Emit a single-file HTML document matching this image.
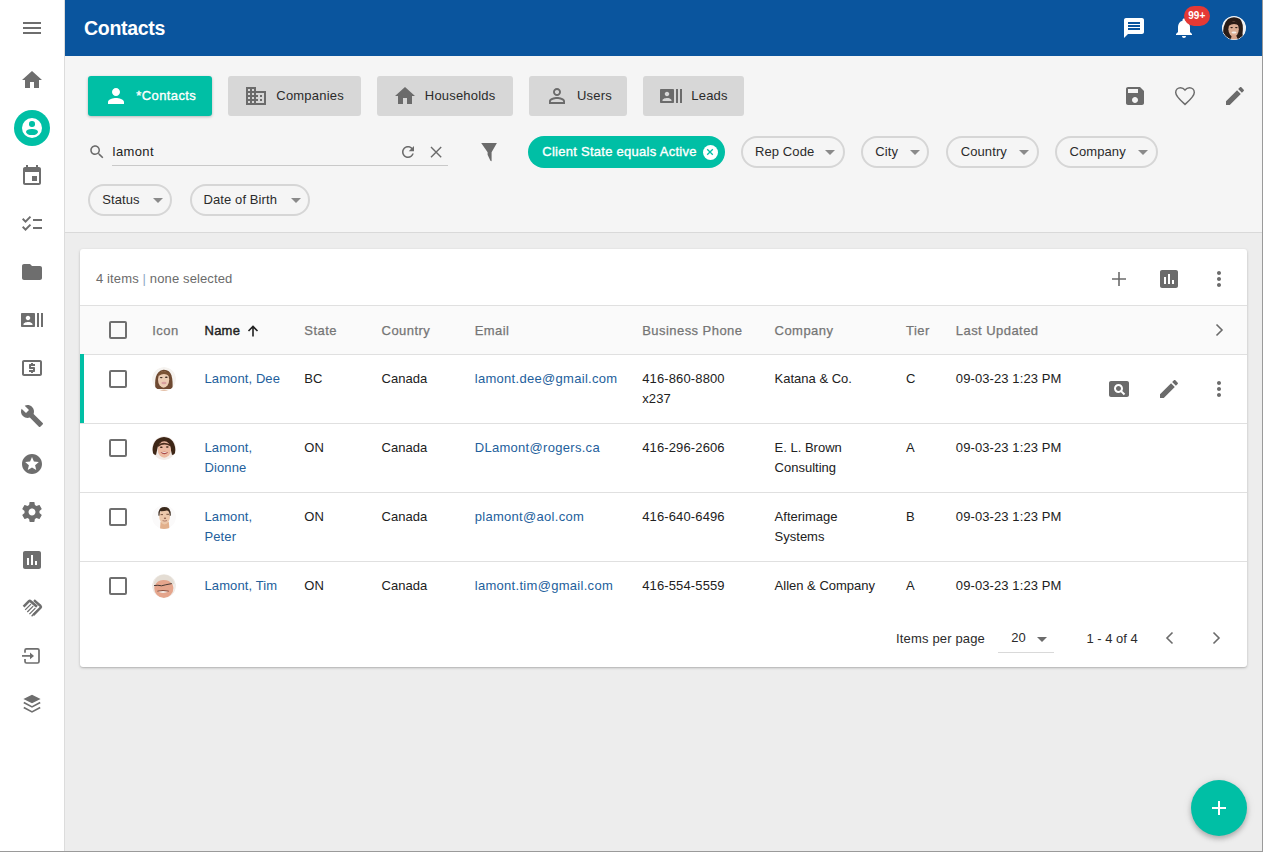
<!DOCTYPE html>
<html><head><meta charset="utf-8">
<style>
*{box-sizing:border-box;margin:0;padding:0}
html,body{width:1263px;height:852px;overflow:hidden;background:#ededed;font-family:"Liberation Sans",sans-serif;color:#212121}
.a{position:absolute;display:block}
.t{position:absolute;white-space:nowrap}
</style></head>
<body>
<div class="a" style="left:0;top:0;width:64px;height:852px;background:#fff"></div>
<div class="a" style="left:64px;top:0;width:1px;height:852px;background:#dcdcdc"></div>
<svg class="a" style="left:18px;top:594px" width="28" height="28" viewBox="0 0 28 28" fill="none" stroke="#6e6e6e"><path d="M5.6 12.6L11 7.2Q11.8 6.4 12.6 7.2L19 12.8" stroke-width="2.6"/><path d="M16 6.2L22.6 12Q23.4 12.8 22.6 13.6L15.2 21.2" stroke-width="2.4"/><path d="M7.2 15.9L13 10.1M9.3 18L15.2 12.1M11.4 20.1L17.4 14.1M13.6 22.3L19.6 16.3" stroke-width="1.3"/></svg>
<svg class="a" style="left:18px;top:642px" width="28" height="28" viewBox="0 0 28 28" fill="none" stroke="#6e6e6e" stroke-width="1.7"><path d="M7 10.8V8.3A1.5 1.5 0 0 1 8.5 6.8H19.5A1.5 1.5 0 0 1 21 8.3V19.5A1.5 1.5 0 0 1 19.5 21H8.5A1.5 1.5 0 0 1 7 19.5V17"/><path d="M4 13.9H12.5"/><path d="M12 10.6L16 13.9 12 17.2Z" fill="#6e6e6e" stroke="none"/></svg>
<svg class="a" style="left:18px;top:690px" width="28" height="28" viewBox="0 0 28 28" fill="none" stroke="#6e6e6e"><path d="M5.4 9L14 4.8 22.6 9 14 13.2Z" fill="#6e6e6e" stroke="none"/><path d="M5.8 12.4L14 16.9 22.2 12.4" stroke-width="1.7"/><path d="M5.8 17.4L14 21.9 22.2 17.4" stroke-width="1.7"/></svg>
<svg class="a" style="left:20.0px;top:16.0px;" width="24" height="24" viewBox="0 0 24 24" fill="#6e6e6e"><path d="M3 18h18v-2H3v2zm0-5h18v-2H3v2zm0-7v2h18V6H3z"/></svg>
<svg class="a" style="left:20.0px;top:68.0px;" width="24" height="24" viewBox="0 0 24 24" fill="#6e6e6e"><path d="M10 20v-6h4v6h5v-8h3L12 3 2 12h3v8z"/></svg>
<svg class="a" style="left:20.0px;top:164.0px;" width="24" height="24" viewBox="0 0 24 24" fill="#6e6e6e"><path d="M17 12h-5v5h5v-5zM16 1v2H8V1H6v2H5c-1.11 0-1.99.9-1.99 2L3 19c0 1.1.89 2 2 2h14c1.1 0 2-.9 2-2V5c0-1.1-.9-2-2-2h-1V1h-2zm3 18H5V8h14v11z"/></svg>
<svg class="a" style="left:20.0px;top:212.0px;" width="24" height="24" viewBox="0 0 24 24" fill="#6e6e6e"><path d="M22 7h-9v2h9V7zm0 8h-9v2h9v-2zM5.54 11L2 7.46l1.41-1.41 2.12 2.12 4.24-4.24 1.41 1.41L5.54 11zm0 8L2 15.46l1.41-1.41 2.12 2.12 4.24-4.24 1.41 1.41L5.54 19z"/></svg>
<svg class="a" style="left:20.0px;top:260.0px;" width="24" height="24" viewBox="0 0 24 24" fill="#6e6e6e"><path d="M10 4H4c-1.1 0-1.99.9-1.99 2L2 18c0 1.1.9 2 2 2h16c1.1 0 2-.9 2-2V8c0-1.1-.9-2-2-2h-8l-2-2z"/></svg>
<svg class="a" style="left:20.0px;top:308.0px;" width="24" height="24" viewBox="0 0 24 24" fill="#6e6e6e"><path d="M21 5v14h2V5h-2zm-4 14h2V5h-2v14zM14 5H2c-.55 0-1 .45-1 1v12c0 .55.45 1 1 1h12c.55 0 1-.45 1-1V6c0-.55-.45-1-1-1zM8 7.75c1.24 0 2.25 1.01 2.25 2.25S9.24 12.25 8 12.25 5.75 11.24 5.75 10 6.76 7.75 8 7.75zM12.5 17h-9v-.75c0-1.5 3-2.25 4.5-2.25s4.5.75 4.5 2.25V17z"/></svg>
<svg class="a" style="left:20.0px;top:356.0px;" width="24" height="24" viewBox="0 0 24 24" fill="#6e6e6e"><path d="M11 17h2v-1h1c.55 0 1-.45 1-1v-3c0-.55-.45-1-1-1h-3v-1h4V8h-2V7h-2v1h-1c-.55 0-1 .45-1 1v3c0 .55.45 1 1 1h3v1H9v2h2v1zm9-13H4c-1.11 0-1.99.89-1.99 2L2 18c0 1.11.89 2 2 2h16c1.11 0 2-.89 2-2V6c0-1.11-.89-2-2-2zm0 14H4V6h16v12z"/></svg>
<svg class="a" style="left:20.0px;top:404.0px;" width="24" height="24" viewBox="0 0 24 24" fill="#6e6e6e"><path d="M22.7 19l-9.1-9.1c.9-2.3.4-5-1.5-6.9-2-2-5-2.4-7.4-1.3L9 6 6 9 1.6 4.7C.4 7.1.9 10.1 2.9 12.1c1.9 1.9 4.6 2.4 6.9 1.5l9.1 9.1c.4.4 1 .4 1.4 0l2.3-2.3c.5-.4.5-1.1.1-1.4z"/></svg>
<svg class="a" style="left:20.0px;top:452.0px;" width="24" height="24" viewBox="0 0 24 24" fill="#6e6e6e"><path d="M11.99 2C6.47 2 2 6.48 2 12s4.47 10 9.99 10C17.52 22 22 17.52 22 12S17.52 2 11.99 2zm4.24 16L12 15.45 7.77 18l1.12-4.81-3.73-3.23 4.92-.42L12 5l1.92 4.53 4.92.42-3.73 3.23L16.23 18z"/></svg>
<svg class="a" style="left:20.0px;top:500.0px;" width="24" height="24" viewBox="0 0 24 24" fill="#6e6e6e"><path d="M19.43 12.98c.04-.32.07-.64.07-.98s-.03-.66-.07-.98l2.11-1.65c.19-.15.24-.42.12-.64l-2-3.46c-.12-.22-.39-.3-.61-.22l-2.49 1c-.52-.4-1.08-.73-1.690-.98l-.38-2.65C14.46 2.18 14.25 2 14 2h-4c-.25 0-.46.18-.49.42l-.38 2.65c-.61.25-1.17.59-1.69.98l-2.49-1c-.23-.09-.49 0-.61.22l-2 3.46c-.13.22-.07.49.12.64l2.11 1.65c-.04.32-.07.65-.07.98s.03.66.07.98l-2.11 1.65c-.19.15-.24.42-.12.64l2 3.46c.12.22.39.3.61.22l2.49-1c.52.4 1.08.73 1.69.98l.38 2.65c.03.24.24.42.49.42h4c.25 0 .46-.18.49-.42l.38-2.65c.61-.25 1.17-.59 1.69-.98l2.49 1c.23.09.49 0 .61-.22l2-3.46c.12-.22.07-.49-.12-.64l-2.11-1.65zM12 15.5c-1.93 0-3.5-1.570-3.5-3.5s1.57-3.5 3.5-3.5 3.5 1.57 3.5 3.5-1.57 3.5-3.5 3.5z"/></svg>
<svg class="a" style="left:20.0px;top:548.0px;" width="24" height="24" viewBox="0 0 24 24" fill="#6e6e6e"><path d="M19 3H5c-1.1 0-2 .9-2 2v14c0 1.1.9 2 2 2h14c1.1 0 2-.9 2-2V5c0-1.1-.9-2-2-2zM9 17H7v-7h2v7zm4 0h-2V7h2v10zm4 0h-2v-4h2v4z"/></svg>
<div class="a" style="left:14px;top:110px;width:36px;height:36px;border-radius:50%;background:#00bfa5"></div>
<div class="a" style="left:21.75px;top:117.75px;width:20.5px;height:20.5px;border-radius:50%;background:#fff"></div>
<div class="a" style="left:29.2px;top:121px;width:5.6px;height:5.6px;border-radius:50%;background:#00bfa5"></div>
<div class="a" style="left:26.3px;top:129.1px;width:11.4px;height:5.8px;border-radius:50%;background:#00bfa5"></div>
<div class="a" style="left:65px;top:0;width:1197px;height:56px;background:#0a559e"></div>
<div class="t" style="left:84px;top:14.24px;font-size:19.5px;line-height:29px;font-weight:700;color:#fff;letter-spacing:-0.3px;">Contacts</div>
<svg class="a" style="left:1122.0px;top:16.0px;" width="24" height="24" viewBox="0 0 24 24" fill="#fff"><path d="M20 2H4c-1.1 0-1.99.9-1.99 2L2 22l4-4h14c1.1 0 2-.9 2-2V4c0-1.1-.9-2-2-2zm-2 12H6v-2h12v2zm0-3H6V9h12v2zm0-3H6V6h12v2z"/></svg>
<svg class="a" style="left:1172.0px;top:16.0px;" width="24" height="24" viewBox="0 0 24 24" fill="#fff"><path d="M12 22c1.1 0 2-.9 2-2h-4c0 1.1.89 2 2 2zm6-6v-5c0-3.07-1.64-5.64-4.5-6.32V4c0-.83-.67-1.5-1.5-1.5s-1.5.67-1.5 1.5v.68C7.63 5.36 6 7.92 6 11v5l-2 2v1h16v-1l-2-2z"/></svg>
<div class="a" style="left:1184px;top:6px;width:26px;height:20px;border-radius:10px;background:#e53935"></div>
<div class="t" style="left:1188.3px;top:8.23px;font-size:10px;line-height:15px;font-weight:700;color:#fff;letter-spacing:0px;">99+</div>
<svg class="a" style="left:1220px;top:14px" width="28" height="28" viewBox="0 0 28 28"><defs><clipPath id="cMe"><circle cx="14" cy="14" r="12"/></clipPath><filter id="fMe"><feGaussianBlur stdDeviation=".35"/></filter></defs><g clip-path="url(#cMe)" filter="url(#fMe)"><circle cx="14" cy="14" r="12" fill="#f0f0f0"/><path d="M3 26Q2 10 8 5 14 1.5 20 5 24 9 22.5 20L24 26Z" fill="#2a1c17"/><ellipse cx="13.6" cy="15.2" rx="5.2" ry="7.6" fill="#dcae94"/><path d="M8 9Q14 5.5 20 10L19.6 12Q14 8 8.4 12Z" fill="#2a1c17"/><path d="M10.5 26L12 21H16L18 26Z" fill="#d8a48a"/><ellipse cx="11.6" cy="13.6" rx="1.3" ry=".6" fill="#2a1c17"/><ellipse cx="16.3" cy="13.6" rx="1.3" ry=".6" fill="#2a1c17"/><ellipse cx="14" cy="18.4" rx="2.5" ry="1" fill="#f4eeea"/><circle cx="14" cy="14" r="12" fill="none" stroke="#fff" stroke-width="1"/></g></svg>
<div class="a" style="left:65px;top:56px;width:1197px;height:176px;background:#f5f5f5"></div>
<div class="a" style="left:65px;top:232px;width:1197px;height:1px;background:#d9d9d9"></div>
<div class="a" style="left:88px;top:76px;width:124px;height:40px;background:#00bfa5;border-radius:3px;box-shadow:0 1px 3px rgba(0,0,0,.25);"></div>
<svg class="a" style="left:104.0px;top:84.0px;" width="24" height="24" viewBox="0 0 24 24" fill="#fff"><path d="M12 12c2.21 0 4-1.79 4-4s-1.79-4-4-4-4 1.79-4 4 1.79 4 4 4zm0 2c-2.67 0-8 1.34-8 4v2h16v-2c0-2.66-5.33-4-8-4z"/></svg>
<div class="t" style="left:136.3px;top:85.80px;font-size:13px;line-height:20px;font-weight:400;color:#fff;letter-spacing:0.4px;-webkit-text-stroke:.35px #fff">*Contacts</div>
<div class="a" style="left:228px;top:76px;width:133px;height:40px;background:#d7d7d7;border-radius:3px;"></div>
<svg class="a" style="left:244.0px;top:84.0px;" width="24" height="24" viewBox="0 0 24 24" fill="#6b6b6b"><path d="M12 7V3H2v18h20V7H12zM6 19H4v-2h2v2zm0-4H4v-2h2v2zm0-4H4V9h2v2zm0-4H4V5h2v2zm4 12H8v-2h2v2zm0-4H8v-2h2v2zm0-4H8V9h2v2zm0-4H8V5h2v2zm10 12h-8v-2h2v-2h-2v-2h2v-2h-2V9h8v10zm-2-8h-2v2h2v-2zm0 4h-2v2h2v-2z"/></svg>
<div class="t" style="left:276.3px;top:85.80px;font-size:13px;line-height:20px;font-weight:400;color:#2b2b2b;letter-spacing:0.2px;">Companies</div>
<div class="a" style="left:377px;top:76px;width:136px;height:40px;background:#d7d7d7;border-radius:3px;"></div>
<svg class="a" style="left:392.6px;top:84.0px;" width="24" height="24" viewBox="0 0 24 24" fill="#6b6b6b"><path d="M10 20v-6h4v6h5v-8h3L12 3 2 12h3v8z"/></svg>
<div class="t" style="left:424.8px;top:85.80px;font-size:13px;line-height:20px;font-weight:400;color:#2b2b2b;letter-spacing:0.2px;">Households</div>
<div class="a" style="left:529px;top:76px;width:98px;height:40px;background:#d7d7d7;border-radius:3px;"></div>
<svg class="a" style="left:545.0px;top:84.0px;" width="24" height="24" viewBox="0 0 24 24" fill="#6b6b6b"><path d="M12 5.9c1.16 0 2.1.94 2.1 2.1s-.94 2.1-2.1 2.1S9.9 9.16 9.9 8s.94-2.1 2.1-2.1m0 9c2.97 0 6.1 1.46 6.1 2.1v1.1H5.9V17c0-.64 3.13-2.1 6.1-2.1M12 4C9.79 4 8 5.79 8 8s1.79 4 4 4 4-1.79 4-4-1.79-4-4-4zm0 9c-2.67 0-8 1.34-8 4v3h16v-3c0-2.66-5.330-4-8-4z"/></svg>
<div class="t" style="left:577px;top:85.80px;font-size:13px;line-height:20px;font-weight:400;color:#2b2b2b;letter-spacing:0.2px;">Users</div>
<div class="a" style="left:643px;top:76px;width:101px;height:40px;background:#d7d7d7;border-radius:3px;"></div>
<svg class="a" style="left:659.0px;top:84.0px;" width="24" height="24" viewBox="0 0 24 24" fill="#6b6b6b"><path d="M21 5v14h2V5h-2zm-4 14h2V5h-2v14zM14 5H2c-.55 0-1 .45-1 1v12c0 .55.45 1 1 1h12c.55 0 1-.45 1-1V6c0-.55-.45-1-1-1zM8 7.75c1.24 0 2.25 1.01 2.25 2.25S9.24 12.25 8 12.25 5.75 11.24 5.75 10 6.76 7.75 8 7.75zM12.5 17h-9v-.75c0-1.5 3-2.25 4.5-2.25s4.5.75 4.5 2.25V17z"/></svg>
<div class="t" style="left:691.3px;top:85.80px;font-size:13px;line-height:20px;font-weight:400;color:#2b2b2b;letter-spacing:0.2px;">Leads</div>
<svg class="a" style="left:1123.0px;top:84.0px;" width="24" height="24" viewBox="0 0 24 24" fill="#6b6b6b"><path d="M17 3H5c-1.11 0-2 .9-2 2v14c0 1.1.89 2 2 2h14c1.1 0 2-.9 2-2V7l-4-4zm-5 16c-1.66 0-3-1.34-3-3s1.34-3 3-3 3 1.34 3 3-1.34 3-3 3zm3-10H5V5h10v4z"/></svg>
<svg class="a" style="left:1173px;top:84px" width="24" height="24" viewBox="0 0 24 24"><path d="M12 20.4L10.9 19.4C6.1 15.1 2.7 12 2.7 8.5 2.7 5.7 4.9 3.7 7.5 3.7 9.2 3.7 10.9 4.6 12 6 13.1 4.6 14.8 3.7 16.5 3.7 19.1 3.7 21.3 5.7 21.3 8.5 21.3 12 17.9 15.1 13.1 19.4Z" fill="none" stroke="#6b6b6b" stroke-width="1.45"/></svg>
<svg class="a" style="left:1223.0px;top:84.0px;" width="24" height="24" viewBox="0 0 24 24" fill="#6b6b6b"><path d="M3 17.25V21h3.75L17.81 9.94l-3.75-3.75L3 17.25zM20.71 7.04c.39-.39.39-1.02 0-1.41l-2.34-2.34c-.39-.39-1.02-.39-1.41 0l-1.83 1.83 3.75 3.75 1.83-1.83z"/></svg>
<svg class="a" style="left:88.0px;top:143.0px;" width="18" height="18" viewBox="0 0 24 24" fill="#6b6b6b"><path d="M15.5 14h-.79l-.28-.27C15.41 12.59 16 11.11 16 9.5 16 5.91 13.09 3 9.5 3S3 5.91 3 9.5 5.91 16 9.5 16c1.61 0 3.09-.59 4.23-1.57l.27.28v.79l5 4.99L20.49 19l-4.99-5zm-6 0C7.01 14 5 11.99 5 9.5S7.01 5 9.5 5 14 7.01 14 9.5 11.99 14 9.5 14z"/></svg>
<div class="t" style="left:112.6px;top:141.50px;font-size:13px;line-height:20px;font-weight:400;color:#212121;letter-spacing:0.4px;">lamont</div>
<div class="a" style="left:112px;top:165px;width:336px;height:1px;background:#c9c9c9"></div>
<svg class="a" style="left:399.0px;top:142.8px;" width="18" height="18" viewBox="0 0 24 24" fill="#6b6b6b"><path d="M17.65 6.35C16.2 4.9 14.21 4 12 4c-4.42 0-7.99 3.58-7.99 8s3.57 8 7.99 8c3.73 0 6.84-2.55 7.73-6h-2.08c-.82 2.33-3.04 4-5.65 4-3.31 0-6-2.69-6-6s2.69-6 6-6c1.66 0 3.14.69 4.22 1.78L13 11h7V4l-2.35 2.35z"/></svg>
<svg class="a" style="left:426px;top:142px" width="20" height="20" viewBox="0 0 20 20"><path d="M5 5L15.2 15.2M15.2 5L5 15.2" stroke="#6b6b6b" stroke-width="1.4"/></svg>
<svg class="a" style="left:477px;top:139px" width="24" height="24" viewBox="0 0 24 24"><path d="M4.2 4H19.9L14.6 13.2V22.2L13.4 21.8 10.6 15.8V13.2Z" fill="#6b6b6b"/></svg>
<div class="a" style="left:528px;top:136px;width:197px;height:32px;border-radius:16px;background:#00bfa5"></div>
<div class="t" style="left:542.3px;top:142.00px;font-size:13px;line-height:20px;font-weight:400;color:#fff;letter-spacing:0.27px;-webkit-text-stroke:.35px #fff">Client State equals Active</div>
<div class="a" style="left:702.5px;top:144.5px;width:15px;height:15px;border-radius:50%;background:#fff"></div>
<svg class="a" style="left:705px;top:147px" width="10" height="10" viewBox="0 0 10 10"><path d="M2.2 2.2L7.8 7.8M7.8 2.2L2.2 7.8" stroke="#00bfa5" stroke-width="1.3"/></svg>
<div class="a" style="left:741.3px;top:136px;width:103.70000000000005px;height:32px;border:2px solid #d6d6d6;border-radius:16px"></div>
<div class="t" style="left:755px;top:142.00px;font-size:13px;line-height:20px;font-weight:400;color:#2b2b2b;letter-spacing:0.1px;">Rep Code</div>
<div class="a" style="left:825px;top:150px;width:0;height:0;border-left:5px solid transparent;border-right:5px solid transparent;border-top:5px solid #8a8a8a"></div>
<div class="a" style="left:861.4px;top:136px;width:67.89999999999998px;height:32px;border:2px solid #d6d6d6;border-radius:16px"></div>
<div class="t" style="left:875.3px;top:142.00px;font-size:13px;line-height:20px;font-weight:400;color:#2b2b2b;letter-spacing:0.1px;">City</div>
<div class="a" style="left:910px;top:150px;width:0;height:0;border-left:5px solid transparent;border-right:5px solid transparent;border-top:5px solid #8a8a8a"></div>
<div class="a" style="left:946.3px;top:136px;width:92.70000000000005px;height:32px;border:2px solid #d6d6d6;border-radius:16px"></div>
<div class="t" style="left:960.7px;top:142.00px;font-size:13px;line-height:20px;font-weight:400;color:#2b2b2b;letter-spacing:0.1px;">Country</div>
<div class="a" style="left:1019px;top:150px;width:0;height:0;border-left:5px solid transparent;border-right:5px solid transparent;border-top:5px solid #8a8a8a"></div>
<div class="a" style="left:1055.2px;top:136px;width:102.79999999999995px;height:32px;border:2px solid #d6d6d6;border-radius:16px"></div>
<div class="t" style="left:1069.4px;top:142.00px;font-size:13px;line-height:20px;font-weight:400;color:#2b2b2b;letter-spacing:0.1px;">Company</div>
<div class="a" style="left:1138px;top:150px;width:0;height:0;border-left:5px solid transparent;border-right:5px solid transparent;border-top:5px solid #8a8a8a"></div>
<div class="a" style="left:88.2px;top:184px;width:84.3px;height:32px;border:2px solid #d6d6d6;border-radius:16px"></div>
<div class="t" style="left:102.2px;top:190.00px;font-size:13px;line-height:20px;font-weight:400;color:#2b2b2b;letter-spacing:0.1px;">Status</div>
<div class="a" style="left:153px;top:198px;width:0;height:0;border-left:5px solid transparent;border-right:5px solid transparent;border-top:5px solid #8a8a8a"></div>
<div class="a" style="left:189.6px;top:184px;width:120.9px;height:32px;border:2px solid #d6d6d6;border-radius:16px"></div>
<div class="t" style="left:203.5px;top:190.00px;font-size:13px;line-height:20px;font-weight:400;color:#2b2b2b;letter-spacing:0.1px;">Date of Birth</div>
<div class="a" style="left:291px;top:198px;width:0;height:0;border-left:5px solid transparent;border-right:5px solid transparent;border-top:5px solid #8a8a8a"></div>
<div class="a" style="left:80px;top:249px;width:1167px;height:418px;background:#fff;border-radius:3px;box-shadow:0 1px 3px rgba(0,0,0,.2),0 1px 1px rgba(0,0,0,.08)"></div>
<div class="t" style="left:96px;top:268.80px;font-size:13px;line-height:20px;font-weight:400;color:#6b6b6b;letter-spacing:0.13px;">4 items <span style="color:#8fa9c4">|</span> none selected</div>
<svg class="a" style="left:1107px;top:267px" width="24" height="24" viewBox="0 0 24 24"><path d="M12 5V19M5 12H19" stroke="#6b6b6b" stroke-width="1.6"/></svg>
<svg class="a" style="left:1157.0px;top:267.0px;" width="24" height="24" viewBox="0 0 24 24" fill="#6b6b6b"><path d="M19 3H5c-1.1 0-2 .9-2 2v14c0 1.1.9 2 2 2h14c1.1 0 2-.9 2-2V5c0-1.1-.9-2-2-2zM9 17H7v-7h2v7zm4 0h-2V7h2v10zm4 0h-2v-4h2v4z"/></svg>
<svg class="a" style="left:1207.0px;top:267.0px;" width="24" height="24" viewBox="0 0 24 24" fill="#6b6b6b"><path d="M12 8c1.1 0 2-.9 2-2s-.9-2-2-2-2 .9-2 2 .9 2 2 2zm0 2c-1.1 0-2 .9-2 2s.9 2 2 2 2-.9 2-2-.9-2-2-2zm0 6c-1.1 0-2 .9-2 2s.9 2 2 2 2-.9 2-2-.9-2-2-2z"/></svg>
<div class="a" style="left:80px;top:305px;width:1167px;height:1px;background:#e0e0e0"></div>
<div class="a" style="left:80px;top:306px;width:1167px;height:48px;background:#fafafa"></div>
<div class="a" style="left:80px;top:354px;width:1167px;height:1px;background:#e0e0e0"></div>
<div class="a" style="left:109px;top:321px;width:18px;height:18px;border:2px solid #6f6f6f;border-radius:2px"></div>
<div class="t" style="left:152.2px;top:320.50px;font-size:13px;line-height:20px;font-weight:400;color:#757575;letter-spacing:0.45px;-webkit-text-stroke:.25px #757575">Icon</div>
<div class="t" style="left:204.5px;top:320.50px;font-size:13px;line-height:20px;font-weight:400;color:#212121;letter-spacing:0.25px;-webkit-text-stroke:.4px #212121">Name</div>
<svg class="a" style="left:246px;top:324px" width="14" height="14" viewBox="0 0 14 14"><path d="M7 12.5V2.5M2.5 7L7 2.5 11.5 7" fill="none" stroke="#212121" stroke-width="1.6"/></svg>
<div class="t" style="left:304.3px;top:320.50px;font-size:13px;line-height:20px;font-weight:400;color:#757575;letter-spacing:0.45px;-webkit-text-stroke:.25px #757575">State</div>
<div class="t" style="left:381.6px;top:320.50px;font-size:13px;line-height:20px;font-weight:400;color:#757575;letter-spacing:0.45px;-webkit-text-stroke:.25px #757575">Country</div>
<div class="t" style="left:474.7px;top:320.50px;font-size:13px;line-height:20px;font-weight:400;color:#757575;letter-spacing:0.45px;-webkit-text-stroke:.25px #757575">Email</div>
<div class="t" style="left:642.2px;top:320.50px;font-size:13px;line-height:20px;font-weight:400;color:#757575;letter-spacing:0.45px;-webkit-text-stroke:.25px #757575">Business Phone</div>
<div class="t" style="left:774.6px;top:320.50px;font-size:13px;line-height:20px;font-weight:400;color:#757575;letter-spacing:0.45px;-webkit-text-stroke:.25px #757575">Company</div>
<div class="t" style="left:906px;top:320.50px;font-size:13px;line-height:20px;font-weight:400;color:#757575;letter-spacing:0.45px;-webkit-text-stroke:.25px #757575">Tier</div>
<div class="t" style="left:955.8px;top:320.50px;font-size:13px;line-height:20px;font-weight:400;color:#757575;letter-spacing:0.45px;-webkit-text-stroke:.25px #757575">Last Updated</div>
<svg class="a" style="left:1207.0px;top:318.0px;" width="24" height="24" viewBox="0 0 24 24" fill="#6b6b6b" stroke="#6b6b6b"><path d="M9.5 6.5l5.5 5.5-5.5 5.5" fill="none" stroke-width="1.6" /></svg>
<div class="a" style="left:80px;top:423px;width:1167px;height:1px;background:#e0e0e0"></div>
<div class="a" style="left:109px;top:370px;width:18px;height:18px;border:2px solid #6f6f6f;border-radius:2px"></div>
<svg class="a" style="left:150px;top:365px" width="28" height="28" viewBox="0 0 28 28"><defs><clipPath id="cDee"><circle cx="14" cy="14" r="12"/></clipPath><filter id="fDee"><feGaussianBlur stdDeviation=".35"/></filter></defs><g clip-path="url(#cDee)" filter="url(#fDee)"><circle cx="14" cy="14" r="12" fill="#f6f3f0"/><path d="M5.5 24C4.5 16 5 6 13.5 4.8 22 4.5 23 13 22.5 24Z" fill="#6e4a30"/><ellipse cx="13.6" cy="14.5" rx="5.6" ry="8.2" fill="#eccdb5"/><path d="M8 8.5Q13 3.5 20 8.5L19 11Q14 7 8.6 11Z" fill="#7a5234"/><ellipse cx="11.2" cy="12.6" rx="1.4" ry=".7" fill="#3a2a20"/><ellipse cx="16.3" cy="12.3" rx="1.4" ry=".7" fill="#3a2a20"/><ellipse cx="14" cy="18" rx="2.6" ry="1.2" fill="#d9a0a0"/><path d="M9 26Q14 23 19 26Z" fill="#e4c0a8"/></g></svg>
<div class="t" style="left:204.5px;top:368.50px;font-size:13px;line-height:20px;font-weight:400;color:#23609c;letter-spacing:0.1px;">Lamont, Dee</div>
<div class="t" style="left:304.3px;top:368.50px;font-size:13px;line-height:20px;font-weight:400;color:#212121;letter-spacing:0px;">BC</div>
<div class="t" style="left:381.6px;top:368.50px;font-size:13px;line-height:20px;font-weight:400;color:#212121;letter-spacing:0px;">Canada</div>
<div class="t" style="left:474.7px;top:368.50px;font-size:13px;line-height:20px;font-weight:400;color:#23609c;letter-spacing:0.3px;">lamont.dee@gmail.com</div>
<div class="t" style="left:642.2px;top:368.50px;font-size:13px;line-height:20px;font-weight:400;color:#212121;letter-spacing:0.13px;">416-860-8800</div>
<div class="t" style="left:642.2px;top:388.50px;font-size:13px;line-height:20px;font-weight:400;color:#212121;letter-spacing:0.13px;">x237</div>
<div class="t" style="left:774.6px;top:368.50px;font-size:13px;line-height:20px;font-weight:400;color:#212121;letter-spacing:0px;">Katana &amp; Co.</div>
<div class="t" style="left:906px;top:368.50px;font-size:13px;line-height:20px;font-weight:400;color:#212121;letter-spacing:0px;">C</div>
<div class="t" style="left:955.8px;top:368.50px;font-size:13px;line-height:20px;font-weight:400;color:#212121;letter-spacing:0.1px;">09-03-23 1:23 PM</div>
<div class="a" style="left:80px;top:492px;width:1167px;height:1px;background:#e0e0e0"></div>
<div class="a" style="left:109px;top:439px;width:18px;height:18px;border:2px solid #6f6f6f;border-radius:2px"></div>
<svg class="a" style="left:150px;top:434px" width="28" height="28" viewBox="0 0 28 28"><defs><clipPath id="cDionne"><circle cx="14" cy="14" r="12"/></clipPath><filter id="fDionne"><feGaussianBlur stdDeviation=".35"/></filter></defs><g clip-path="url(#cDionne)" filter="url(#fDionne)"><circle cx="14" cy="14" r="12" fill="#f3ece8"/><path d="M2.5 20Q1.5 4 14 3 26 3.5 25.5 20L22 21 20 12Q14 8 8 12L6 21Z" fill="#3e2618"/><ellipse cx="14.3" cy="15.5" rx="6.6" ry="8.2" fill="#ecbba2"/><path d="M7.6 11.5Q12 6.5 20.6 10.5L20.4 12.3Q14 8.5 7.9 13Z" fill="#4a2e1e"/><ellipse cx="11.3" cy="13.3" rx="1.4" ry=".7" fill="#3a2418"/><ellipse cx="17.3" cy="13" rx="1.4" ry=".7" fill="#3a2418"/><path d="M10.5 18.2Q14.3 17.2 18.2 18.2Q14.3 22.3 10.5 18.2Z" fill="#a84a4a"/><path d="M11.4 18.4Q14.3 17.8 17.3 18.4Q14.3 19.6 11.4 18.4Z" fill="#f4e6e0"/></g></svg>
<div class="t" style="left:204.5px;top:437.50px;font-size:13px;line-height:20px;font-weight:400;color:#23609c;letter-spacing:0.1px;">Lamont,</div>
<div class="t" style="left:204.5px;top:457.50px;font-size:13px;line-height:20px;font-weight:400;color:#23609c;letter-spacing:0.1px;">Dionne</div>
<div class="t" style="left:304.3px;top:437.50px;font-size:13px;line-height:20px;font-weight:400;color:#212121;letter-spacing:0px;">ON</div>
<div class="t" style="left:381.6px;top:437.50px;font-size:13px;line-height:20px;font-weight:400;color:#212121;letter-spacing:0px;">Canada</div>
<div class="t" style="left:474.7px;top:437.50px;font-size:13px;line-height:20px;font-weight:400;color:#23609c;letter-spacing:0.3px;">DLamont@rogers.ca</div>
<div class="t" style="left:642.2px;top:437.50px;font-size:13px;line-height:20px;font-weight:400;color:#212121;letter-spacing:0.13px;">416-296-2606</div>
<div class="t" style="left:774.6px;top:437.50px;font-size:13px;line-height:20px;font-weight:400;color:#212121;letter-spacing:0px;">E. L. Brown</div>
<div class="t" style="left:774.6px;top:457.50px;font-size:13px;line-height:20px;font-weight:400;color:#212121;letter-spacing:0px;">Consulting</div>
<div class="t" style="left:906px;top:437.50px;font-size:13px;line-height:20px;font-weight:400;color:#212121;letter-spacing:0px;">A</div>
<div class="t" style="left:955.8px;top:437.50px;font-size:13px;line-height:20px;font-weight:400;color:#212121;letter-spacing:0.1px;">09-03-23 1:23 PM</div>
<div class="a" style="left:80px;top:561px;width:1167px;height:1px;background:#e0e0e0"></div>
<div class="a" style="left:109px;top:508px;width:18px;height:18px;border:2px solid #6f6f6f;border-radius:2px"></div>
<svg class="a" style="left:150px;top:503px" width="28" height="28" viewBox="0 0 28 28"><defs><clipPath id="cPeter"><circle cx="14" cy="14" r="12"/></clipPath><filter id="fPeter"><feGaussianBlur stdDeviation=".35"/></filter></defs><g clip-path="url(#cPeter)" filter="url(#fPeter)"><circle cx="14" cy="14" r="12" fill="#fbfafa"/><path d="M10.5 19L10 26H19.5L18.8 19Z" fill="#e2b08c"/><ellipse cx="14.6" cy="13.6" rx="5.4" ry="7.8" fill="#ecc8aa"/><path d="M8.4 12.5Q7.8 4 14.5 4 21.2 4 20.8 12.5L19.8 13Q19.5 8 17 7.6 13 8.6 10 8.2 9.6 11 9.3 13Z" fill="#3b2a1d"/><path d="M10.6 11.6H13M16.4 11.3H19" stroke="#6a4a36" stroke-width=".9"/><ellipse cx="15" cy="15.2" rx="1.1" ry=".7" fill="#8a5a46"/><path d="M12.6 17.6Q14.8 18.6 17 17.6" stroke="#a06a5a" stroke-width=".8" fill="none"/></g></svg>
<div class="t" style="left:204.5px;top:506.50px;font-size:13px;line-height:20px;font-weight:400;color:#23609c;letter-spacing:0.1px;">Lamont,</div>
<div class="t" style="left:204.5px;top:526.50px;font-size:13px;line-height:20px;font-weight:400;color:#23609c;letter-spacing:0.1px;">Peter</div>
<div class="t" style="left:304.3px;top:506.50px;font-size:13px;line-height:20px;font-weight:400;color:#212121;letter-spacing:0px;">ON</div>
<div class="t" style="left:381.6px;top:506.50px;font-size:13px;line-height:20px;font-weight:400;color:#212121;letter-spacing:0px;">Canada</div>
<div class="t" style="left:474.7px;top:506.50px;font-size:13px;line-height:20px;font-weight:400;color:#23609c;letter-spacing:0.3px;">plamont@aol.com</div>
<div class="t" style="left:642.2px;top:506.50px;font-size:13px;line-height:20px;font-weight:400;color:#212121;letter-spacing:0.13px;">416-640-6496</div>
<div class="t" style="left:774.6px;top:506.50px;font-size:13px;line-height:20px;font-weight:400;color:#212121;letter-spacing:0px;">Afterimage</div>
<div class="t" style="left:774.6px;top:526.50px;font-size:13px;line-height:20px;font-weight:400;color:#212121;letter-spacing:0px;">Systems</div>
<div class="t" style="left:906px;top:506.50px;font-size:13px;line-height:20px;font-weight:400;color:#212121;letter-spacing:0px;">B</div>
<div class="t" style="left:955.8px;top:506.50px;font-size:13px;line-height:20px;font-weight:400;color:#212121;letter-spacing:0.1px;">09-03-23 1:23 PM</div>
<div class="a" style="left:109px;top:577px;width:18px;height:18px;border:2px solid #6f6f6f;border-radius:2px"></div>
<svg class="a" style="left:150px;top:572px" width="28" height="28" viewBox="0 0 28 28"><defs><clipPath id="cTim"><circle cx="14" cy="14" r="12"/></clipPath><filter id="fTim"><feGaussianBlur stdDeviation=".35"/></filter></defs><g clip-path="url(#cTim)" filter="url(#fTim)"><circle cx="14" cy="14" r="12" fill="#f0ece8"/><ellipse cx="13.8" cy="16" rx="9.6" ry="10" fill="#e5a58c"/><path d="M3.6 11Q6 3 14 2.8 22 3 24.6 11.5L22.4 12.4Q19 7.6 13 8 7 8.2 5 13.5Z" fill="#e4ddd4"/><path d="M4 13.6Q8 12.8 11.5 13.8 15 12.8 21.8 11.6" fill="none" stroke="#4a3a34" stroke-width="1"/><path d="M7.4 19.2Q13 17.6 18.8 19.2Q13 22.8 7.4 19.2Z" fill="#f5ece6"/><path d="M7.4 19.2Q13 17.8 18.8 19.2" stroke="#7a3a2a" stroke-width=".9" fill="none"/></g></svg>
<div class="t" style="left:204.5px;top:575.50px;font-size:13px;line-height:20px;font-weight:400;color:#23609c;letter-spacing:0.1px;">Lamont, Tim</div>
<div class="t" style="left:304.3px;top:575.50px;font-size:13px;line-height:20px;font-weight:400;color:#212121;letter-spacing:0px;">ON</div>
<div class="t" style="left:381.6px;top:575.50px;font-size:13px;line-height:20px;font-weight:400;color:#212121;letter-spacing:0px;">Canada</div>
<div class="t" style="left:474.7px;top:575.50px;font-size:13px;line-height:20px;font-weight:400;color:#23609c;letter-spacing:0.3px;">lamont.tim@gmail.com</div>
<div class="t" style="left:642.2px;top:575.50px;font-size:13px;line-height:20px;font-weight:400;color:#212121;letter-spacing:0.13px;">416-554-5559</div>
<div class="t" style="left:774.6px;top:575.50px;font-size:13px;line-height:20px;font-weight:400;color:#212121;letter-spacing:0px;">Allen &amp; Company</div>
<div class="t" style="left:906px;top:575.50px;font-size:13px;line-height:20px;font-weight:400;color:#212121;letter-spacing:0px;">A</div>
<div class="t" style="left:955.8px;top:575.50px;font-size:13px;line-height:20px;font-weight:400;color:#212121;letter-spacing:0.1px;">09-03-23 1:23 PM</div>
<div class="a" style="left:80px;top:354px;width:4px;height:69px;background:#00bfa5"></div>
<svg class="a" style="left:1107.0px;top:377.0px;" width="24" height="24" viewBox="0 0 24 24" fill="#6b6b6b"><path d="M11.5 9C10.12 9 9 10.12 9 11.5s1.12 2.5 2.5 2.5 2.5-1.12 2.5-2.5S12.88 9 11.5 9zM20 4H4c-1.1 0-2 .9-2 2v12c0 1.1.9 2 2 2h16c1.1 0 2-.9 2-2V6c0-1.1-.9-2-2-2zm-3.21 14.21l-2.91-2.91c-.69.44-1.51.71-2.38.71C9.01 16 7 13.99 7 11.5S9.01 7 11.5 7 16 9.01 16 11.5c0 .88-.26 1.69-.7 2.39l2.91 2.9-1.42 1.42z"/></svg>
<svg class="a" style="left:1157.0px;top:377.0px;" width="24" height="24" viewBox="0 0 24 24" fill="#6b6b6b"><path d="M3 17.25V21h3.75L17.81 9.94l-3.75-3.75L3 17.25zM20.71 7.04c.39-.39.39-1.02 0-1.41l-2.34-2.34c-.39-.39-1.02-.39-1.41 0l-1.83 1.83 3.75 3.75 1.83-1.83z"/></svg>
<svg class="a" style="left:1207.0px;top:377.0px;" width="24" height="24" viewBox="0 0 24 24" fill="#6b6b6b"><path d="M12 8c1.1 0 2-.9 2-2s-.9-2-2-2-2 .9-2 2 .9 2 2 2zm0 2c-1.1 0-2 .9-2 2s.9 2 2 2 2-.9 2-2-.9-2-2-2zm0 6c-1.1 0-2 .9-2 2s.9 2 2 2 2-.9 2-2-.9-2-2-2z"/></svg>
<div class="t" style="left:896.1px;top:628.90px;font-size:13px;line-height:20px;font-weight:400;color:#2b2b2b;letter-spacing:0.15px;">Items per page</div>
<div class="t" style="left:1011.3px;top:628.00px;font-size:13px;line-height:20px;font-weight:400;color:#2b2b2b;letter-spacing:0px;">20</div>
<div class="a" style="left:1037px;top:637px;width:0;height:0;border-left:5px solid transparent;border-right:5px solid transparent;border-top:5px solid #6b6b6b"></div>
<div class="a" style="left:998px;top:652px;width:56px;height:1px;background:#d9d9d9"></div>
<div class="t" style="left:1086.5px;top:628.90px;font-size:13px;line-height:20px;font-weight:400;color:#2b2b2b;letter-spacing:0px;">1 - 4 of 4</div>
<svg class="a" style="left:1158.0px;top:626.0px;" width="24" height="24" viewBox="0 0 24 24" fill="#6b6b6b" stroke="#6b6b6b"><path d="M14.5 6.5L9 12l5.5 5.5" fill="none" stroke-width="1.6" /></svg>
<svg class="a" style="left:1204.0px;top:626.0px;" width="24" height="24" viewBox="0 0 24 24" fill="#6b6b6b" stroke="#6b6b6b"><path d="M9.5 6.5l5.5 5.5-5.5 5.5" fill="none" stroke-width="1.6" /></svg>
<div class="a" style="left:1191px;top:780px;width:56px;height:56px;border-radius:50%;background:#00bfa5;box-shadow:0 3px 5px rgba(0,0,0,.22),0 1px 10px rgba(0,0,0,.1)"></div>
<svg class="a" style="left:1207.0px;top:796.0px;" width="24" height="24" viewBox="0 0 24 24" fill="#fff"><path d="M19 13h-6v6h-2v-6H5v-2h6V5h2v6h6v2z"/></svg>
<div class="a" style="left:1262px;top:0;width:1px;height:852px;background:#9a9a9a"></div>
<div class="a" style="left:0;top:851px;width:1263px;height:1px;background:#9a9a9a"></div>
</body></html>
